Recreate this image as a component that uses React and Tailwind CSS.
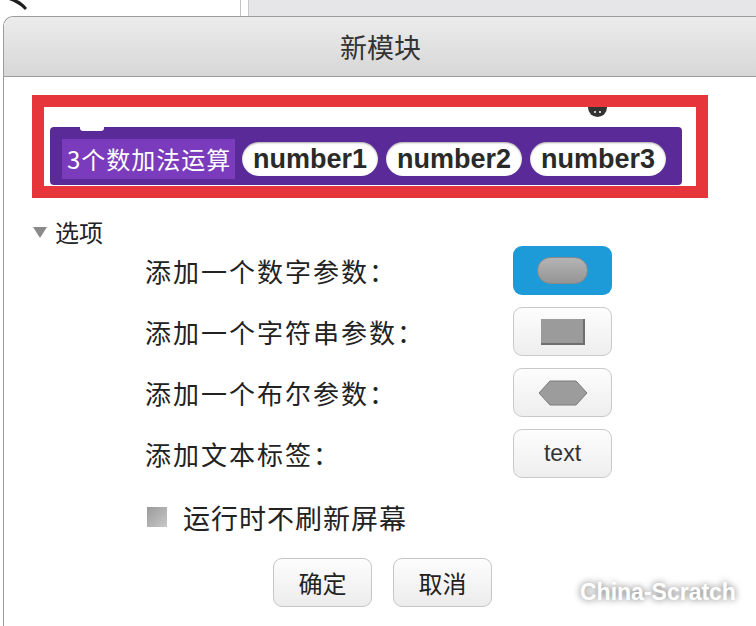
import React from 'react';

const cjk = "font-['Noto_Sans_CJK_SC','Noto_Sans',sans-serif]";

const OptionButton = ({ active, children }) => (
  <div
    className={
      active
        ? 'w-[99px] h-[49px] rounded-[9px] bg-[#1d9ad8] flex items-center justify-center'
        : 'w-[99px] h-[49px] rounded-[9px] border border-[#c9c9c9] bg-gradient-to-b from-[#fdfdfd] to-[#eeeeee] flex items-center justify-center'
    }
  >
    {children}
  </div>
);

const ShapeRow = ({ label, children, active }) => (
  <div className="grid grid-cols-[368px_99px] items-center h-[49px]">
    <span className={`${cjk} text-[26px] tracking-[2px] text-[#222] leading-none`}>{label}</span>
    <OptionButton active={active}>{children}</OptionButton>
  </div>
);

const Pill = ({ text }) => (
  <div className="h-[34px] px-[11px] rounded-full bg-white flex items-center shadow-[inset_0_1px_2px_rgba(0,0,0,0.35)]">
    <span className="font-['Liberation_Sans',Arial,sans-serif] font-bold text-[27px] leading-none text-[#2a2a2a]">
      {text}
    </span>
  </div>
);

const App = () => {
  return (
    <div className="w-[756px] h-[626px] bg-white overflow-hidden relative">
      {/* background strip behind the dialog */}
      <div className="flex h-[16px]">
        <div className="w-[240px] bg-white relative">
          <svg className="absolute left-0 top-0" width="30" height="14" viewBox="0 0 30 14">
            <path d="M9 0 C15 2 20 5 25 10 L27 8 C24 4 20 1 17 0 Z" fill="#1e1e1e" />
          </svg>
        </div>
        <div className="w-px bg-[#c4c4c4]" />
        <div className="w-[7px] bg-white" />
        <div className="flex-1 bg-[#e6e6e8] border-l border-[#c8c8c8]" />
      </div>

      {/* dialog */}
      <div className="ml-[3px] w-[800px] h-[620px] border-l border-t border-[#9d9d9d] rounded-tl-[10px] bg-white">
        <div className="h-[60px] pr-[46px] rounded-tl-[10px] bg-gradient-to-b from-[#ececec] to-[#d7d7d7] border-b border-[#9a9a9a] flex items-center justify-center">
          <span className={`${cjk} text-[27px] text-[#333] leading-none`}>新模块</span>
        </div>

        <div className="flex flex-col">
          {/* block preview */}
          <div className="ml-[28px] mt-[18px] w-[676px] h-[103px] border-[12px] border-[#e6353b] bg-white relative">
            <div className="absolute left-[544px] top-0 w-[19px] h-[10px] rounded-b-full bg-[#333] flex items-center justify-center gap-[3px]">
              <span className="w-[2px] h-[2px] bg-white rounded-full" />
              <span className="w-[2px] h-[2px] bg-white rounded-full" />
            </div>
            <div className="ml-[6px] mt-[20px] w-[632px] h-[58px] rounded-[4px] bg-[#5a2a99] relative flex items-center pt-[6px] pl-[12px] gap-[7px]">
              <div className="absolute left-[30px] top-0 w-[24px] h-[4px] bg-white rounded-b-[3px]" />
              <div className="h-[40px] w-[173px] bg-[#7a3cbd] flex items-center pl-[5px]">
                <span className={`${cjk} text-[24px] tracking-[1px] text-white leading-none`}>3个数加法运算</span>
              </div>
              <div className="flex gap-[8px]">
                <Pill text="number1" />
                <Pill text="number2" />
                <Pill text="number3" />
              </div>
            </div>
          </div>

          {/* options toggle */}
          <div className="mt-[19px] h-[30px] ml-[29px] flex items-center gap-[8px]">
            <svg width="14" height="11" viewBox="0 0 14 11">
              <polygon points="0,0 14,0 7,11" fill="#8a8a8a" />
            </svg>
            <span className={`${cjk} text-[24px] text-[#222] leading-none`}>选项</span>
          </div>

          <div className="mt-[-1px] pl-[141px] flex flex-col gap-[12px]">
            <ShapeRow label="添加一个数字参数：" active>
              <div className="w-[51px] h-[27px] rounded-full bg-gradient-to-b from-[#b4b4b4] to-[#959595] border border-[#8a8a8a]" />
            </ShapeRow>
            <ShapeRow label="添加一个字符串参数：">
              <div className="w-[44px] h-[26px] bg-[#9b9b9b] border-r-2 border-b-2 border-[#6e6e6e]" />
            </ShapeRow>
            <ShapeRow label="添加一个布尔参数：">
              <svg width="50" height="26" viewBox="0 0 50 26">
                <polygon points="1,13 12,1 38,1 49,13 38,25 12,25" fill="#9c9c9c" stroke="#7a7a7a" strokeWidth="1" />
              </svg>
            </ShapeRow>
            <ShapeRow label="添加文本标签：">
              <span className="font-['Liberation_Sans',Arial,sans-serif] text-[23px] text-[#333] leading-none">text</span>
            </ShapeRow>
          </div>

          <div className="mt-[28px] ml-[143px] flex items-center gap-[16px] h-[22px]">
            <div className="w-[20px] h-[20px] bg-gradient-to-br from-[#9a9a9a] to-[#c8c8c8]" />
            <span className={`${cjk} text-[27px] tracking-[1px] text-[#222] leading-none`}>运行时不刷新屏幕</span>
          </div>

          <div className="mt-[30px] ml-[269px] flex gap-[21px]">
            <div className="w-[99px] h-[49px] rounded-[9px] border border-[#c6c6c6] bg-gradient-to-b from-[#fdfdfd] to-[#ececec] flex items-center justify-center">
              <span className={`${cjk} text-[24px] text-[#222] leading-none`}>确定</span>
            </div>
            <div className="w-[99px] h-[49px] rounded-[9px] border border-[#c6c6c6] bg-gradient-to-b from-[#fdfdfd] to-[#ececec] flex items-center justify-center">
              <span className={`${cjk} text-[24px] text-[#222] leading-none`}>取消</span>
            </div>
          </div>
        </div>
      </div>

      {/* watermark */}
      <div className="absolute left-[580px] top-[581px] font-['Liberation_Sans',Arial,sans-serif] font-bold text-[23px] leading-none text-white [text-shadow:0_0_7px_rgba(0,0,0,0.6)]">
        China-Scratch
      </div>
    </div>
  );
};

export default App;
